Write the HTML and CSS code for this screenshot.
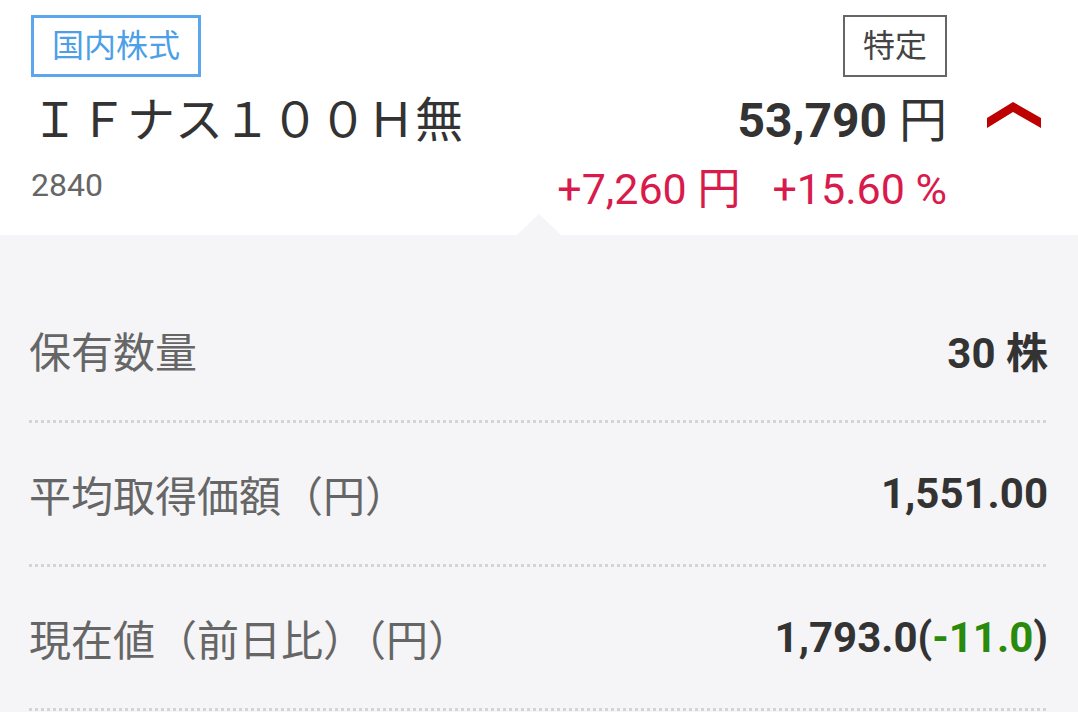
FILE: index.html
```html
<!DOCTYPE html>
<html lang="ja">
<head>
  <meta charset="UTF-8">
  <title>保有銘柄</title>
  <link rel="stylesheet" href="styles.css">
</head>
<body>
  <div class="head">
    <div class="summary">
      <div class="line tags">
        <span class="tag tag-market">国内株式</span>
        <span class="tag tag-account">特定</span>
      </div>
      <div class="line main">
        <span class="name">ＩＦナス１００Ｈ無</span>
        <span class="price"><b>53,790</b> 円</span>
      </div>
      <div class="line sub">
        <span class="code">2840</span>
        <span class="change">+7,260 円<span class="pct">+15.60 %</span></span>
      </div>
    </div>
    <div class="toggle">
      <svg width="54" height="26" viewBox="0 0 54 26">
        <polygon points="0,16 26,0 54,16 54,26 26,10 0,26" fill="#bd0000"/>
      </svg>
    </div>
  </div>

  <div class="details">
    <div class="row">
      <span class="label">保有数量</span>
      <span class="value">30 株</span>
    </div>
    <div class="row">
      <span class="label">平均取得価額（円）</span>
      <span class="value">1,551.00</span>
    </div>
    <div class="row">
      <span class="label">現在値（前日比）（円）</span>
      <span class="value">1,793.0(<span class="down">-11.0</span>)</span>
    </div>
  </div>
</body>
</html>
```

FILE: styles.css
```css
body { margin: 0; font-family: Roboto, "Noto Sans CJK JP", sans-serif; color: #333; background: #f5f5f7; }

.head { display: flex; background: #fff; padding: 15px 0 25px 31px; }
.summary { flex: 1; }
.line { display: flex; justify-content: space-between; align-items: center; }
.toggle { width: 131px; padding-left: 40px; padding-top: 87px; box-sizing: border-box; }

.tag { font-size: 32px; line-height: 56px; padding: 0 18px; }
.tag-market { color: #4d9fe8; border: 3px solid #5ba6ec; }
.tag-account { color: #444; border: 2px solid #666; line-height: 58px; }

.main { margin-top: 10px; height: 58px; }
.name { font-size: 48px; color: #333; }
.price { font-size: 48px; }
.price b { font-weight: 700; }

.sub { margin-top: 15px; height: 50px; }
.code { font-size: 32px; color: #666; }
.change { font-size: 43px; color: #d81b4c; }
.pct { margin-left: 32px; }

.details { position: relative; padding: 44px 29px 0; }
.details::before { content: ""; position: absolute; top: -21px; left: 517px; border-left: 22px solid transparent; border-right: 22px solid transparent; border-bottom: 21px solid #f5f5f7; }

.row { display: flex; justify-content: space-between; align-items: center; height: 144px; padding: 0 1px 3px 0; box-sizing: border-box; background: linear-gradient(to right, #d4d4d4 50%, transparent 50%) left bottom / 6px 3px repeat-x; }
.label { font-size: 42px; color: #666; }
.value { font-size: 42px; font-weight: 700; color: #333; }
.down { color: #2a8a0c; }
```
